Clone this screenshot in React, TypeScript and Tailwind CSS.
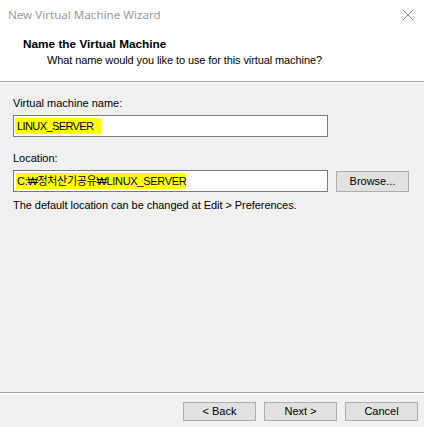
const font = { fontFamily: '"Liberation Sans", "Noto Sans CJK KR", sans-serif' };

function Button({ label }: { label: string }) {
  return (
    <button className="h-[19px] w-[73px] border border-[#adadad] bg-[#e1e1e1] text-[11px] leading-none text-black">
      {label}
    </button>
  );
}

export default function App() {
  return (
    <div
      className="flex h-[427px] w-[424px] flex-col bg-[#f0f0f0] text-[11px] text-black"
      style={font}
    >
      <div className="bg-white">
        <div className="flex h-[30px] items-center justify-between pl-[8px] pr-[8px]">
          <span
            className="text-[11.6px] text-[#9a9a9a]"
            style={{ fontFamily: '"Noto Sans", sans-serif' }}
          >
            New Virtual Machine Wizard
          </span>
          <svg width="12" height="12" viewBox="0 0 12 12" className="mr-[2px]">
            <path d="M1 1L11 11M11 1L1 11" stroke="#8a8a8a" strokeWidth="1" />
          </svg>
        </div>
        <div className="h-[51px] pl-[23px] pt-[6px]">
          <div className="text-[11.8px] font-bold leading-[16px]">Name the Virtual Machine</div>
          <div className="pl-[24px] leading-[16px] tracking-[-0.1px]">
            What name would you like to use for this virtual machine?
          </div>
        </div>
      </div>
      <div className="h-px bg-[#a0a0a0]" />
      <div className="h-px bg-white" />

      <div className="flex flex-1 flex-col px-[13px] pt-[11px]">
        <div className="leading-[18px]">Virtual machine name:</div>
        <div className="mt-[3px] flex h-[22px] w-[315px] items-center border border-[#7a7a7a] bg-white pl-[1px]">
          <span className="bg-[#ffff00] pl-[2px] pr-[8px] leading-[16px] tracking-[-0.6px]">
            LINUX_SERVER
          </span>
        </div>

        <div className="mt-[12px] leading-[18px]">Location:</div>
        <div className="mt-[3px] flex items-center gap-[8px]">
          <div className="flex h-[22px] w-[315px] items-center border border-[#7a7a7a] bg-white pl-[2px]">
            <span className="bg-[#ffff00] pl-[1px] leading-[16px] tracking-[-0.3px]">
              C:₩정처산기공유₩LINUX_SERVER
            </span>
          </div>
          <button className="h-[21px] w-[73px] border border-[#adadad] bg-[#e1e1e1] text-[11px] leading-none">
            Browse...
          </button>
        </div>
        <div className="mt-[4px] leading-[18px] tracking-[-0.05px]">
          The default location can be changed at Edit &gt; Preferences.
        </div>
      </div>

      <div className="h-px bg-[#a0a0a0]" />
      <div className="h-px bg-white" />
      <div className="flex h-[33px] items-start justify-end gap-[8px] pr-[6px] pt-[8px]">
        <Button label="< Back" />
        <Button label="Next >" />
        <Button label="Cancel" />
      </div>
    </div>
  );
}
